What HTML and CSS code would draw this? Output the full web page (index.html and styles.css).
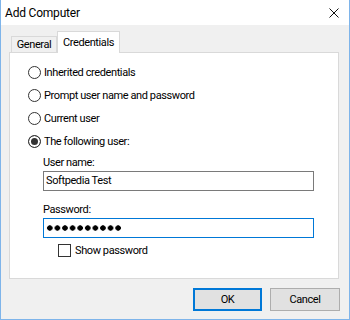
FILE: index.html
```html
<!DOCTYPE html>
<html lang="en">
<head>
    <meta charset="UTF-8">
    <title>Add Computer</title>
    <link rel="stylesheet" href="styles.css">
</head>
<body>
    <div class="window">
        <div class="titlebar">
            <span class="title">Add Computer</span>
            <svg class="close" width="10" height="10" viewBox="0 0 10 10">
                <path d="M0.5 0.5L9.5 9.5M9.5 0.5L0.5 9.5" stroke="#111" stroke-width="1" fill="none"/>
            </svg>
        </div>

        <div class="content">
            <div class="tabs">
                <div class="tab">General</div>
                <div class="tab tab-active">Credentials</div>
            </div>

            <div class="panel">
                <div class="option"><span class="radio"></span>Inherited credentials</div>
                <div class="option"><span class="radio"></span>Prompt user name and password</div>
                <div class="option"><span class="radio"></span>Current user</div>
                <div class="option"><span class="radio radio-on"></span>The following user:</div>

                <div class="fields">
                    <div class="label">User name:</div>
                    <div class="textbox">Softpedia Test</div>

                    <div class="label label-pw">Password:</div>
                    <div class="textbox textbox-focus"><div class="dots"></div></div>

                    <div class="check-row"><span class="checkbox"></span>Show password</div>
                </div>
            </div>

            <div class="buttons">
                <div class="button button-default">OK</div>
                <div class="button">Cancel</div>
            </div>
        </div>
    </div>
</body>
</html>
```

FILE: styles.css
```css
body {
    margin: 0;
    font-family: Roboto, "Liberation Sans", sans-serif;
    font-size: 11px;
    letter-spacing: -0.4px;
    color: #000;
}

.window {
    width: 350px;
    height: 320px;
    box-sizing: border-box;
    border: 1px solid #7eb4ea;
    border-top: none;
    background: #f0f0f0;
}

.titlebar {
    height: 25px;
    background: #fff;
    display: flex;
    align-items: center;
    justify-content: space-between;
    padding: 0 10px 0 4px;
}

.title {
    font-size: 12px;
    letter-spacing: -0.2px;
}

.content {
    padding: 6px 9px 8px 8px;
}

.tabs {
    display: flex;
    align-items: flex-end;
    padding-left: 2px;
}

.tab {
    box-sizing: border-box;
    height: 16px;
    width: 46px;
    border: 1px solid #d9d9d9;
    border-bottom: none;
    line-height: 15px;
    text-align: center;
}

.tab-active {
    height: 22px;
    width: 63px;
    margin-bottom: -1px;
    padding-top: 3px;
    background: #fff;
}

.panel {
    box-sizing: border-box;
    height: 227px;
    margin-right: 1px;
    border: 1px solid #d9d9d9;
    background: #fff;
    padding: 8px 0 0 18px;
}

.option {
    height: 23px;
    display: flex;
    align-items: center;
}

.radio {
    width: 13px;
    height: 13px;
    box-sizing: border-box;
    border: 1px solid #333;
    border-radius: 50%;
    margin-right: 3px;
    background: #fff;
}

.radio-on {
    background: #333;
    box-shadow: inset 0 0 0 2px #fff;
}

.fields {
    margin-left: 15px;
    width: 271px;
}

.label {
    margin-top: 2px;
    line-height: 15px;
}

.label-pw {
    margin-top: 11px;
}

.textbox {
    box-sizing: border-box;
    height: 20px;
    margin-top: 1px;
    border: 1px solid #7a7a7a;
    padding-left: 2px;
    line-height: 18px;
    background: #fff;
    display: flex;
    align-items: center;
}

.textbox-focus {
    border-color: #0078d7;
}

.dots {
    width: 76px;
    height: 6px;
    background: radial-gradient(circle, #000 2.4px, transparent 3px) 0 0 / 7.6px 6px repeat-x;
}

.check-row {
    display: flex;
    align-items: center;
    margin: 6px 0 0 15px;
    height: 13px;
}

.checkbox {
    width: 13px;
    height: 13px;
    box-sizing: border-box;
    border: 1px solid #333;
    margin-right: 4px;
}

.buttons {
    display: flex;
    justify-content: flex-end;
    gap: 8px;
    margin-top: 9px;
}

.button {
    box-sizing: border-box;
    width: 70px;
    height: 23px;
    border: 1px solid #adadad;
    background: #e1e1e1;
    display: flex;
    align-items: center;
    justify-content: center;
}

.button-default {
    width: 69px;
    border: 2px solid #0078d7;
}
```
